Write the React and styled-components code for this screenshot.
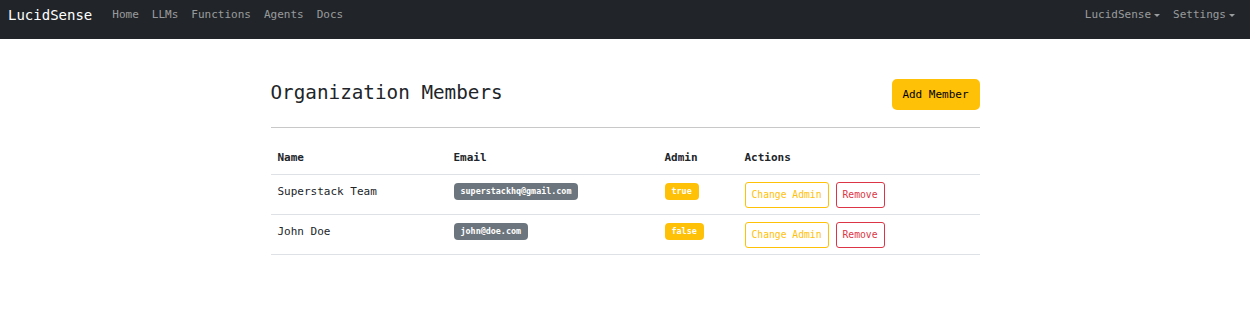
import React from "react";
import styled, { createGlobalStyle } from "styled-components";

const GlobalStyle = createGlobalStyle`
  body {
    margin: 0;
    background: #fff;
    font-family: "DejaVu Sans Mono", "Liberation Mono", monospace;
    color: #212529;
  }
`;

const Navbar = styled.nav`
  height: 39px;
  box-sizing: border-box;
  background: #212529;
  display: flex;
  align-items: flex-start;
  padding: 6px 8px 0;
  line-height: 18px;
`;

const Brand = styled.span`
  color: #fff;
  font-size: 14px;
  margin-right: 20px;
`;

const NavLinks = styled.div`
  display: flex;
  gap: 13px;
  flex: 1;
`;

const NavLink = styled.span`
  color: rgba(255, 255, 255, 0.55);
  font-size: 11px;
`;

const Dropdown = styled.span`
  color: rgba(255, 255, 255, 0.55);
  font-size: 11px;
  margin-left: ${(p) => p.gap || 0}px;
  display: inline-flex;
  align-items: center;

  &:after {
    content: "";
    margin-left: 3px;
    border-top: 3px solid currentColor;
    border-left: 3px solid transparent;
    border-right: 3px solid transparent;
  }
`;

const Container = styled.main`
  width: 709px;
  margin: 0 auto;
  padding-top: 40px;
`;

const HeaderRow = styled.div`
  display: flex;
  justify-content: space-between;
  align-items: center;
  padding-bottom: 17px;
  border-bottom: 1px solid #c8c8c8;
`;

const Title = styled.h2`
  margin: 0 0 5px;
  font-size: 19.3px;
  font-weight: 400;
`;

const AddButton = styled.button`
  background: #ffc107;
  border: none;
  border-radius: 5px;
  height: 31px;
  width: 88px;
  font-family: inherit;
  font-size: 11px;
  color: #000;
`;

const Table = styled.table`
  width: 100%;
  table-layout: fixed;
  border-collapse: collapse;
  margin-top: 15px;
  font-size: 11px;
`;

const Th = styled.th`
  box-sizing: border-box;
  text-align: left;
  font-weight: 700;
  padding: 8px 7px 10px;
  border-bottom: 1px solid #dee2e6;
  width: ${(p) => (p.w ? `${p.w}px` : "auto")};
`;

const Td = styled.td`
  padding: 7px 7px;
  height: 25px;
  border-bottom: 1px solid #dee2e6;
  vertical-align: top;
`;

const Cell = styled.div`
  display: flex;
  align-items: center;
  gap: 7px;
  height: 25px;
  margin-top: ${(p) => p.up || 0}px;
`;

const Badge = styled.span`
  display: inline-block;
  background: ${(p) => p.bg};
  color: #fff;
  font-weight: 700;
  font-size: 8.4px;
  line-height: 17px;
  padding: 0 7px;
  border-radius: 4px;
`;

const OutlineButton = styled.button`
  background: #fff;
  border: 1px solid ${(p) => p.color};
  color: ${(p) => p.color};
  border-radius: 3px;
  height: 26px;
  padding: 0 6px;
  font-family: inherit;
  font-size: 9.7px;
`;

const members = [
  { name: "Superstack Team", email: "superstackhq@gmail.com", admin: "true" },
  { name: "John Doe", email: "john@doe.com", admin: "false" },
];

export default function App() {
  return (
    <>
      <GlobalStyle />
      <Navbar>
        <Brand>LucidSense</Brand>
        <NavLinks>
          {["Home", "LLMs", "Functions", "Agents", "Docs"].map((l) => (
            <NavLink key={l}>{l}</NavLink>
          ))}
        </NavLinks>
        <Dropdown>LucidSense</Dropdown>
        <Dropdown gap={13}>Settings</Dropdown>
        <span style={{ width: 7 }} />
      </Navbar>
      <Container>
        <HeaderRow>
          <Title>Organization Members</Title>
          <AddButton>Add Member</AddButton>
        </HeaderRow>
        <Table>
          <thead>
            <tr>
              <Th w={176}>Name</Th>
              <Th w={211}>Email</Th>
              <Th w={80}>Admin</Th>
              <Th>Actions</Th>
            </tr>
          </thead>
          <tbody>
            {members.map((m) => (
              <tr key={m.email}>
                <Td>
                  <Cell up={-3}>{m.name}</Cell>
                </Td>
                <Td>
                  <Cell up={-3}>
                    <Badge bg="#6c757d">{m.email}</Badge>
                  </Cell>
                </Td>
                <Td>
                  <Cell up={-3}>
                    <Badge bg="#ffc107">{m.admin}</Badge>
                  </Cell>
                </Td>
                <Td>
                  <Cell>
                    <OutlineButton color="#ffc107">Change Admin</OutlineButton>
                    <OutlineButton color="#dc3545">Remove</OutlineButton>
                  </Cell>
                </Td>
              </tr>
            ))}
          </tbody>
        </Table>
      </Container>
    </>
  );
}
